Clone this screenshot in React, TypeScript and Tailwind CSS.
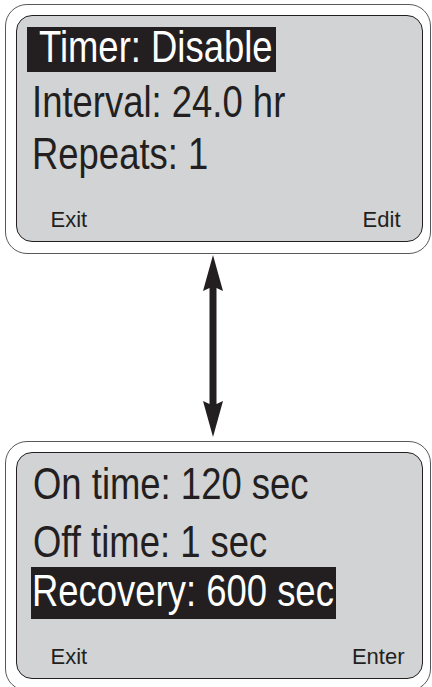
import React from "react";

const sans = "font-['Liberation_Sans',Arial,sans-serif]";

function N({ children }: { children: React.ReactNode }) {
  return (
    <span className="inline-block whitespace-nowrap origin-left scale-x-[0.81] mr-[-60px]">{children}</span>
  );
}

function Arrow() {
  return (
    <svg width="20" height="182" viewBox="0 0 20 182" className="block">
      <path
        d="M10 0 L20 36 L13.5 33 L13.5 149 L20 146 L10 182 L0 146 L6.5 149 L6.5 33 L0 36 Z"
        fill="#231f20"
      />
    </svg>
  );
}

export default function App() {
  return (
    <div className={`w-[432px] h-[687px] overflow-hidden bg-white text-[#231f20] ${sans}`}>
      {/* top device */}
      <div className="ml-[5px] mt-[4px] w-[426px] h-[250px] rounded-[22px] border border-[#58595b] bg-white">
        <div className="ml-[10px] mt-[10px] w-[407px] h-[227px] rounded-[16px] border-[1.5px] border-[#231f20] bg-[#d1d3d4] flex flex-col">
          <div className="flex pl-[9.5px] pt-[10.5px]">
            <div className="w-[249px] h-[45px] bg-[#231f20] text-white text-[45px] leading-[40px] pt-[0.5px] pl-[12px] whitespace-nowrap">
              <N>Timer: Disable</N>
            </div>
          </div>
          <div className="text-[45px] leading-[52px] h-[52px] pl-[14.5px] mt-[4px]"><N>Interval: 24.0 hr</N></div>
          <div className="text-[45px] leading-[52px] h-[52px] pl-[14.5px]"><N>Repeats: 1</N></div>
          <div className="text-[22px] leading-[22px] h-[22px] mt-[29px] flex justify-between pl-[33.5px] pr-[21.5px]">
            <span>Exit</span>
            <span>Edit</span>
          </div>
        </div>
      </div>

      {/* arrow */}
      <div className="h-[187px] pt-[1px] flex justify-start pl-[203px]">
        <Arrow />
      </div>

      {/* bottom device */}
      <div className="ml-[5px] w-[426px] h-[250px] rounded-[22px] border border-[#58595b] bg-white">
        <div className="ml-[10px] mt-[10px] w-[407px] h-[227px] rounded-[16px] border-[1.5px] border-[#231f20] bg-[#d1d3d4] flex flex-col">
          <div className="text-[45px] leading-[52px] h-[52px] pl-[15.5px] mt-[5px]"><N>On time: 120 sec</N></div>
          <div className="text-[45px] leading-[52px] h-[52px] pl-[15.5px] mt-[6px]"><N>Off time: 1 sec</N></div>
          <div className="flex pl-[13.5px] mt-[-1px]">
            <div className="w-[305px] h-[52px] bg-[#231f20] text-white text-[45px] leading-[46px] pt-[0.5px] pl-[1px] whitespace-nowrap">
              <N>Recovery: 600 sec</N>
            </div>
          </div>
          <div className="text-[22px] leading-[22px] h-[22px] mt-[27px] flex justify-between pl-[33.5px] pr-[17.5px]">
            <span>Exit</span>
            <span>Enter</span>
          </div>
        </div>
      </div>
    </div>
  );
}
